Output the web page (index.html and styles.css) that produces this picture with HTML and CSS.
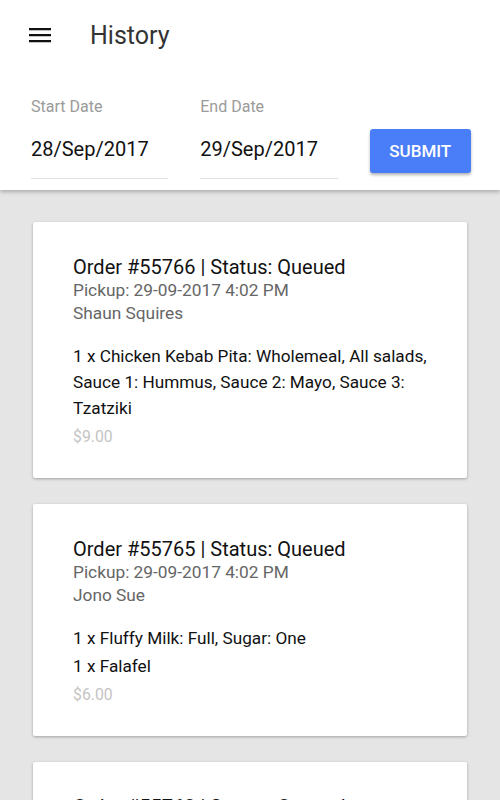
FILE: index.html
```html
<!DOCTYPE html>
<html lang="en">
<head>
  <meta charset="UTF-8" />
  <meta name="viewport" content="width=device-width, initial-scale=1.0"/>
  <title>History</title>
  <link rel="stylesheet" href="styles.css">
</head>
<body>
  <header class="header">
    <div class="toolbar">
      <svg class="menu-icon" width="24" height="24" viewBox="0 0 24 24">
        <path d="M1 5h22v2.2H1zM1 11h22v2.2H1zM1 17h22v2.2H1z" fill="#111"/>
      </svg>
      <h1 class="title">History</h1>
    </div>

    <form class="filter">
      <div class="field">
        <label>Start Date</label>
        <div class="date-input">28/Sep/2017</div>
      </div>
      <div class="field">
        <label>End Date</label>
        <div class="date-input">29/Sep/2017</div>
      </div>
      <button type="button" class="submit">SUBMIT</button>
    </form>
  </header>

  <main class="orders">
    <div class="card">
      <div class="order-title">Order #55766 | Status: Queued</div>
      <div class="meta">Pickup: 29-09-2017 4:02 PM</div>
      <div class="meta">Shaun Squires</div>
      <div class="items">
        <p>1 x Chicken Kebab Pita: Wholemeal, All salads, Sauce 1: Hummus, Sauce 2: Mayo, Sauce 3: Tzatziki</p>
      </div>
      <div class="price">$9.00</div>
    </div>

    <div class="card">
      <div class="order-title">Order #55765 | Status: Queued</div>
      <div class="meta">Pickup: 29-09-2017 4:02 PM</div>
      <div class="meta">Jono Sue</div>
      <div class="items">
        <p>1 x Fluffy Milk: Full, Sugar: One</p>
        <p>1 x Falafel</p>
      </div>
      <div class="price">$6.00</div>
    </div>

    <div class="card">
      <div class="order-title">Order #55763 | Status: Queued</div>
      <div class="meta">Pickup: 29-09-2017 4:01 PM</div>
      <div class="meta">Shaun Squires</div>
      <div class="items">
        <p>1 x Falafel</p>
      </div>
      <div class="price">$6.00</div>
    </div>
  </main>
</body>
</html>
```

FILE: styles.css
```css
body {
  margin: 0;
  font-family: Roboto, "Liberation Sans", sans-serif;
  background: #e5e5e5;
  height: 800px;
  overflow: hidden;
}

.header {
  background: #fff;
  box-shadow: 0 2px 4px rgba(0, 0, 0, 0.25);
  position: relative;
  z-index: 1;
}

.toolbar {
  display: flex;
  align-items: center;
  height: 70px;
  padding-left: 28px;
}

.menu-icon {
  display: block;
}

.title {
  margin: 0 0 0 38px;
  font-size: 25px;
  font-weight: 400;
  color: #333;
}

.filter {
  display: flex;
  align-items: flex-start;
  padding: 28px 29px 11px 31px;
  margin: 0;
}

.field {
  width: 138px;
  margin-right: 32px;
}

label {
  display: block;
  font-size: 16px;
  color: #9a9a9a;
  line-height: 18px;
}

.date-input {
  font-size: 20px;
  color: #111;
  line-height: 24px;
  padding: 21px 0 17px;
  border-bottom: 1px solid #e0e0e0;
}

.submit {
  margin-top: 31px;
  width: 102px;
  height: 44px;
  background: #4a7ef8;
  color: #fff;
  border: none;
  border-radius: 3px;
  font-family: inherit;
  font-size: 17px;
  font-weight: 500;
  box-shadow: 0 2px 3px rgba(0, 0, 0, 0.3);
}

.orders {
  padding: 32px 33px;
}

.card {
  background: #fff;
  border-radius: 2px;
  box-shadow: 0 1px 3px rgba(0, 0, 0, 0.3);
  padding: 33px 30px 29px 40px;
  margin-bottom: 26px;
}

.order-title {
  font-size: 20px;
  line-height: 24px;
  color: #111;
}

.meta {
  font-size: 17.3px;
  line-height: 23px;
  color: #666;
}

.items {
  margin-top: 18px;
}

.items p {
  margin: 0;
  font-size: 17.2px;
  line-height: 26px;
  color: #111;
}

.items p + p {
  margin-top: 2px;
}

.price {
  margin-top: 4px;
  font-size: 15.8px;
  line-height: 24px;
  color: #c4c4c4;
}
```
